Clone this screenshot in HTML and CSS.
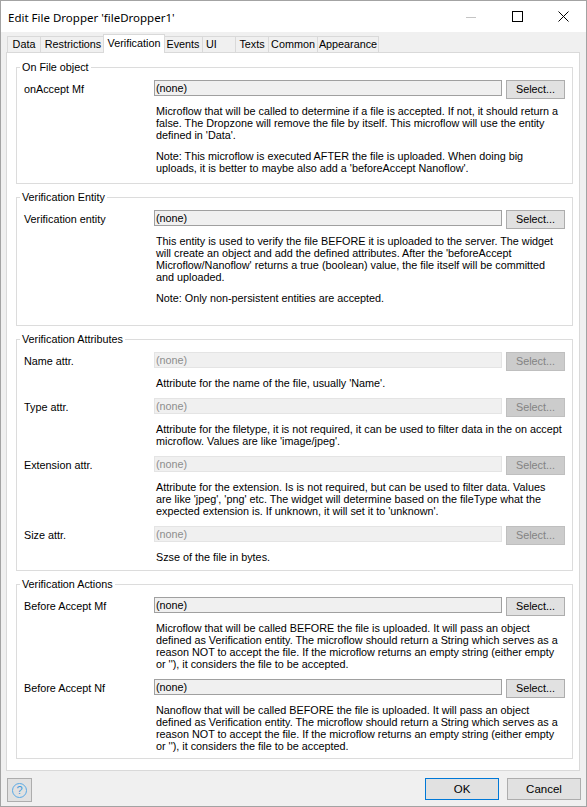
FILE: index.html
```html
<!DOCTYPE html>
<html>
<head>
<meta charset="utf-8">
<title>Edit File Dropper</title>
<link rel="stylesheet" href="styles.css">
</head>
<body>
<div class="window">
  <div class="titlebar">
    <div class="title">Edit File Dropper 'fileDropper1'</div>
    <div class="caption-btn">
      <svg width="10" height="10" viewBox="0 0 10 10"><line x1="0" y1="5.5" x2="10" y2="5.5" stroke="#c4c4c4" stroke-width="1"/></svg>
    </div>
    <div class="caption-btn">
      <svg width="11" height="11" viewBox="0 0 11 11"><rect x="0.5" y="0.5" width="10" height="10" fill="none" stroke="#000" stroke-width="1"/></svg>
    </div>
    <div class="caption-btn">
      <svg width="11" height="11" viewBox="0 0 11 11"><path d="M0.5 0.5 L10.5 10.5 M10.5 0.5 L0.5 10.5" stroke="#000" stroke-width="1"/></svg>
    </div>
  </div>

  <div class="tabstrip">
    <div class="tab tab-data">Data</div>
    <div class="tab tab-restrictions">Restrictions</div>
    <div class="tab tab-verification tab-active">Verification</div>
    <div class="tab tab-events">Events</div>
    <div class="tab tab-ui">UI</div>
    <div class="tab tab-texts">Texts</div>
    <div class="tab tab-common">Common</div>
    <div class="tab tab-appearance">Appearance</div>
  </div>

  <div class="panel">
    <fieldset class="group group-1">
      <legend class="group-title">On File object</legend>
      <div class="field">
        <div class="field-label">onAccept Mf</div>
        <div class="field-control">
          <div class="input">(none)</div>
          <div class="btn-select">Select...</div>
        </div>
        <div class="desc">
          <p class="para">Microflow that will be called to determine if a file is accepted. If not, it should return a<br>false. The Dropzone will remove the file by itself. This microflow will use the entity<br>defined in 'Data'.</p>
          <p class="para">Note: This microflow is executed AFTER the file is uploaded. When doing big<br>uploads, it is better to maybe also add a 'beforeAccept Nanoflow'.</p>
        </div>
      </div>
    </fieldset>

    <fieldset class="group group-2">
      <legend class="group-title">Verification Entity</legend>
      <div class="field">
        <div class="field-label">Verification entity</div>
        <div class="field-control">
          <div class="input">(none)</div>
          <div class="btn-select">Select...</div>
        </div>
        <div class="desc">
          <p class="para">This entity is used to verify the file BEFORE it is uploaded to the server. The widget<br>will create an object and add the defined attributes. After the 'beforeAccept<br>Microflow/Nanoflow' returns a true (boolean) value, the file itself will be committed<br>and uploaded.</p>
          <p class="para">Note: Only non-persistent entities are accepted.</p>
        </div>
      </div>
    </fieldset>

    <fieldset class="group group-3">
      <legend class="group-title">Verification Attributes</legend>
      <div class="field">
        <div class="field-label">Name attr.</div>
        <div class="field-control">
          <div class="input input-disabled">(none)</div>
          <div class="btn-select btn-disabled">Select...</div>
        </div>
        <div class="desc"><p class="para">Attribute for the name of the file, usually 'Name'.</p></div>
      </div>
      <div class="field">
        <div class="field-label">Type attr.</div>
        <div class="field-control">
          <div class="input input-disabled">(none)</div>
          <div class="btn-select btn-disabled">Select...</div>
        </div>
        <div class="desc"><p class="para">Attribute for the filetype, it is not required, it can be used to filter data in the on accept<br>microflow. Values are like 'image/jpeg'.</p></div>
      </div>
      <div class="field">
        <div class="field-label">Extension attr.</div>
        <div class="field-control">
          <div class="input input-disabled">(none)</div>
          <div class="btn-select btn-disabled">Select...</div>
        </div>
        <div class="desc"><p class="para">Attribute for the extension. Is is not required, but can be used to filter data. Values<br>are like 'jpeg', 'png' etc. The widget will determine based on the fileType what the<br>expected extension is. If unknown, it will set it to 'unknown'.</p></div>
      </div>
      <div class="field">
        <div class="field-label">Size attr.</div>
        <div class="field-control">
          <div class="input input-disabled">(none)</div>
          <div class="btn-select btn-disabled">Select...</div>
        </div>
        <div class="desc"><p class="para">Szse of the file in bytes.</p></div>
      </div>
    </fieldset>

    <fieldset class="group group-4">
      <legend class="group-title">Verification Actions</legend>
      <div class="field">
        <div class="field-label">Before Accept Mf</div>
        <div class="field-control">
          <div class="input">(none)</div>
          <div class="btn-select">Select...</div>
        </div>
        <div class="desc"><p class="para">Microflow that will be called BEFORE the file is uploaded. It will pass an object<br>defined as Verification entity. The microflow should return a String which serves as a<br>reason NOT to accept the file. If the microflow returns an empty string (either empty<br>or ''), it considers the file to be accepted.</p></div>
      </div>
      <div class="field">
        <div class="field-label">Before Accept Nf</div>
        <div class="field-control">
          <div class="input">(none)</div>
          <div class="btn-select">Select...</div>
        </div>
        <div class="desc"><p class="para">Nanoflow that will be called BEFORE the file is uploaded. It will pass an object<br>defined as Verification entity. The microflow should return a String which serves as a<br>reason NOT to accept the file. If the microflow returns an empty string (either empty<br>or ''), it considers the file to be accepted.</p></div>
      </div>
    </fieldset>
  </div>

  <div class="footer">
    <div class="help-btn"><span class="help-icon">?</span></div>
    <div class="spacer"></div>
    <div class="btn btn-default">OK</div>
    <div class="btn">Cancel</div>
  </div>
</div>
</body>
</html>
```

FILE: styles.css
```css
* { box-sizing: border-box; }

html, body {
  margin: 0;
  padding: 0;
}

body {
  width: 587px;
  height: 807px;
  overflow: hidden;
  font-family: "Liberation Sans", Arial, sans-serif;
  font-size: 10.8px;
  color: #000;
  background: #f0f0f0;
}

.window {
  width: 587px;
  height: 807px;
  border: 1px solid #a3a3a3;
  background: #f0f0f0;
  display: flex;
  flex-direction: column;
}

/* Title bar */
.titlebar {
  flex: none;
  height: 31px;
  background: #fff;
  display: flex;
  align-items: center;
}

.title {
  flex: 1;
  padding-left: 7px;
  padding-top: 1px;
  font-family: "Noto Sans", "Open Sans", sans-serif;
  font-size: 11.5px;
  color: #000;
  white-space: nowrap;
}

.caption-btn {
  width: 46px;
  height: 31px;
  display: flex;
  align-items: center;
  justify-content: center;
}

.caption-btn svg { display: block; }

/* Tabs */
.tabstrip {
  flex: none;
  height: 20px;
  display: flex;
  align-items: flex-end;
  padding-left: 6px;
}

.tab {
  height: 16px;
  border-left: 1px solid #d9d9d9;
  border-top: 1px solid #d9d9d9;
  background: #f0f0f0;
  line-height: 15px;
  text-align: center;
  white-space: nowrap;
}

.tab-data { width: 33px; }
.tab-restrictions { width: 65px; }
.tab-verification { width: 62px; }
.tab-events { width: 39px; }
.tab-ui { width: 33px; text-align: left; padding-left: 3px; }
.tab-texts { width: 33px; }
.tab-common { width: 49px; }
.tab-appearance { width: 62px; border-right: 1px solid #d9d9d9; }

.tab-active {
  position: relative;
  z-index: 1;
  height: 19px;
  margin: 0 -2px -1px -2px;
  background: #fff;
  border-right: 1px solid #d9d9d9;
  line-height: 16px;
}

/* Panel */
.panel {
  flex: none;
  height: 719px;
  margin: 0 6px 0 5px;
  border: 1px solid #d9d9d9;
  background: #fff;
  padding: 8px 6px 0 9px;
}

.group {
  margin: 0;
  min-width: 0;
  border: 1px solid #dcdcdc;
  padding: 6px 7px 6px 7px;
}

.group + .group { margin-top: 7px; }

.group-1 { padding-bottom: 9px; }
.group-2 { padding-bottom: 21px; }
.group-3 { padding-bottom: 7px; }

.group-title {
  margin-left: -4px;
  padding: 0 2px;
  line-height: 13px;
  color: #000;
}

.field {
  display: grid;
  grid-template-columns: 130px 1fr;
}

.field + .field { margin-top: 9px; }

.field-label {
  line-height: 19px;
  white-space: nowrap;
}

.field-control {
  display: flex;
  align-items: flex-start;
  gap: 4px;
}

.input {
  flex: 1;
  height: 16px;
  border: 1px solid #a0a0a0;
  background: #f0f0f0;
  padding-left: 1px;
  line-height: 14px;
  white-space: nowrap;
}

.input-disabled {
  border-color: #e4e4e4;
  color: #8d8d8d;
}

.btn-select {
  width: 59px;
  height: 19px;
  border: 1px solid #adadad;
  background: #e1e1e1;
  line-height: 17px;
  text-align: center;
}

.btn-disabled {
  background: #cccccc;
  border-color: #bfbfbf;
  color: #838383;
}

.desc {
  grid-column: 2;
  margin-top: 6px;
  padding-left: 2px;
  line-height: 12px;
}

.para { margin: 0; }
.para + .para { margin-top: 9px; }

/* Footer */
.footer {
  flex: 1;
  display: flex;
  align-items: flex-start;
  padding: 7px 5px 0 6px;
}

.help-btn {
  width: 25px;
  height: 24px;
  border: 1px solid #adadad;
  background: #e1e1e1;
  display: flex;
  align-items: center;
  justify-content: center;
}

.help-icon {
  width: 15px;
  height: 15px;
  border: 1px solid #58a9e6;
  border-radius: 50%;
  color: #3b97dd;
  font-size: 11px;
  line-height: 13px;
  text-align: center;
}

.spacer { flex: 1; }

.btn {
  width: 74px;
  height: 22px;
  border: 1px solid #adadad;
  background: #e1e1e1;
  line-height: 20px;
  text-align: center;
  font-size: 11.5px;
}

.btn-default { border-color: #0078d7; }

.btn + .btn { margin-left: 8px; }
```
